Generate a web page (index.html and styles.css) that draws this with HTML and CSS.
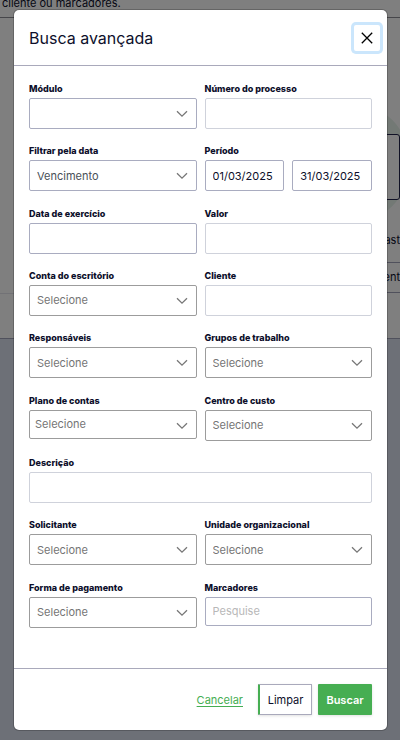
FILE: index.html
```html
<!DOCTYPE html>
<html lang="pt-BR">
<head>
<meta charset="utf-8">
<meta name="viewport" content="width=device-width, initial-scale=1">
<title>Busca avançada</title>
<link rel="stylesheet" href="styles.css">
</head>
<body>
<svg class="sprite" aria-hidden="true">
  <symbol id="chevron" viewBox="0 0 12 8"><path d="M1 1.2 6 6.2 11 1.2" fill="none" stroke="currentColor" stroke-width="1.3"/></symbol>
</svg>
<div class="page" aria-hidden="true">
  <div class="page-intro">cliente ou marcadores.</div>
  <div class="page-panel">
    <div class="blob"></div>
    <div class="page-card"></div>
    <div class="page-cell page-cell-first">ast</div>
    <div class="page-cell page-cell-lined">ent</div>
    <div class="page-rule"></div>
  </div>
</div>
<div class="backdrop"></div>
<form class="modal" role="dialog" aria-labelledby="title">
  <header class="modal-header">
    <h1 id="title">Busca avançada</h1>
    <button type="button" class="close" aria-label="Fechar"><svg viewBox="0 0 12 12" width="12" height="12"><path d="M.8.8 11.2 11.2M11.2.8.8 11.2" stroke="currentColor" stroke-width="1.3"/></svg></button>
  </header>
  <div class="fields">
    <div class="field"><label for="modulo">Módulo</label><div class="select"><select id="modulo" class="control"><option></option></select><svg><use href="#chevron"/></svg></div></div>
    <div class="field"><label for="numero">Número do processo</label><input id="numero" class="control light"></div>
    <div class="field"><label for="filtro">Filtrar pela data</label><div class="select"><select id="filtro" class="control chosen"><option>Vencimento</option></select><svg><use href="#chevron"/></svg></div></div>
    <div class="field"><label for="inicio">Período</label><div class="period"><input id="inicio" class="control" value="01/03/2025"><input class="control" aria-label="Período até" value="31/03/2025"></div></div>
    <div class="field"><label for="exercicio">Data de exercício</label><input id="exercicio" class="control"></div>
    <div class="field"><label for="valor">Valor</label><input id="valor" class="control light"></div>
    <div class="field"><label for="conta">Conta do escritório</label><div class="select"><select id="conta" class="control gray"><option>Selecione</option></select><svg><use href="#chevron"/></svg></div></div>
    <div class="field"><label for="cliente">Cliente</label><input id="cliente" class="control light"></div>
    <div class="field"><label for="resp">Responsáveis</label><div class="select"><select id="resp" class="control gray"><option>Selecione</option></select><svg><use href="#chevron"/></svg></div></div>
    <div class="field"><label for="grupos">Grupos de trabalho</label><div class="select"><select id="grupos" class="control gray"><option>Selecione</option></select><svg><use href="#chevron"/></svg></div></div>
    <div class="field"><label for="plano">Plano de contas</label><div class="select"><select id="plano" class="control gray compact tight"><option>Selecione</option></select><svg><use href="#chevron"/></svg></div></div>
    <div class="field"><label for="centro">Centro de custo</label><div class="select"><select id="centro" class="control gray"><option>Selecione</option></select><svg><use href="#chevron"/></svg></div></div>
    <div class="field wide"><label for="descricao">Descrição</label><input id="descricao" class="control light"></div>
    <div class="field"><label for="solicitante">Solicitante</label><div class="select"><select id="solicitante" class="control gray"><option>Selecione</option></select><svg><use href="#chevron"/></svg></div></div>
    <div class="field"><label for="unidade">Unidade organizacional</label><div class="select"><select id="unidade" class="control gray"><option>Selecione</option></select><svg><use href="#chevron"/></svg></div></div>
    <div class="field"><label for="forma">Forma de pagamento</label><div class="select"><select id="forma" class="control gray"><option>Selecione</option></select><svg><use href="#chevron"/></svg></div></div>
    <div class="field"><label for="marcadores">Marcadores</label><input id="marcadores" class="control compact" placeholder="Pesquise"></div>
  </div>
  <footer class="modal-footer">
    <a href="#" class="cancel">Cancelar</a>
    <button type="reset" class="button clear">Limpar</button>
    <button type="submit" class="button search">Buscar</button>
  </footer>
</form>
</body>
</html>
```
FILE: styles.css
```css
* {
  box-sizing: border-box;
}

body {
  margin: 0;
  min-height: 100vh;
  display: flex;
  position: relative;
  font-family: Inter, "Liberation Sans", sans-serif;
  font-size: 11px;
  color: #0d0f2b;
}

.sprite {
  position: absolute;
  width: 0;
  height: 0;
}

/* Page behind the dialog */
.page {
  position: absolute;
  inset: 0;
  overflow: hidden;
  background: #dbe0ee;
}

.page-intro {
  height: 18px;
  padding-left: 2px;
  background: #fff;
  border-bottom: 1px solid #8c8c94;
  line-height: 6px;
}

.page-panel {
  position: relative;
  height: 321px;
  padding-top: 116px;
  background: #fff;
  border-bottom: 1px solid #a0a3b8;
}

.blob {
  position: absolute;
  top: 84px;
  right: -10px;
  width: 122px;
  height: 122px;
  border-radius: 50%;
  background: #e6f3ea;
}

.page-card {
  position: relative;
  height: 66px;
  width: 60px;
  margin-left: auto;
  background: #fff;
  border: 1px solid #20234a;
  border-radius: 3px;
}

.page-cell {
  position: relative;
  width: 60px;
  margin-left: auto;
  height: 31px;
  line-height: 28px;
  text-align: right;
}

.page-cell-first {
  height: 36px;
  margin-top: 26px;
}

.page-cell-lined {
  border-top: 1px solid #a0a3b8;
  border-bottom: 1px solid #a0a3b8;
}

.page-rule {
  width: 60px;
  border-top: 1px solid #e4e5ec;
}

.backdrop {
  position: absolute;
  inset: 0;
  background: rgba(0, 0, 0, .5);
}

/* Dialog */
.modal {
  position: relative;
  flex: 1;
  display: flex;
  flex-direction: column;
  margin: 9px 12px 9px 13px;
  background: #fff;
  background-clip: padding-box;
  border: 1px solid rgba(0, 0, 0, .2);
  border-radius: 6px;
}

.modal-header {
  display: flex;
  align-items: center;
  justify-content: space-between;
  height: 56px;
  padding: 0 7px 0 15px;
  border-bottom: 1px solid #a9a9bb;
}

h1 {
  margin: 0;
  font-size: 16px;
  font-weight: 400;
  line-height: 24px;
}

.close {
  display: grid;
  place-items: center;
  width: 26px;
  height: 26px;
  padding: 0;
  color: #000;
  background: #fff;
  border: 0;
  border-radius: 2px;
  box-shadow: 0 0 0 3px #cbe6fc;
}

.fields {
  flex: 1;
  display: grid;
  grid-template-columns: 1fr 1fr;
  grid-auto-rows: 1fr;
  column-gap: 8px;
  padding: 17px 15px 24px;
}

.field {
  min-width: 0;
}

.wide {
  grid-column: 1 / -1;
}

label {
  display: block;
  height: 15px;
  font-size: 9px;
  font-weight: 800;
  line-height: 12px;
}

.control {
  display: block;
  width: 100%;
  min-width: 0;
  height: 31px;
  margin: 0;
  padding: 0 7px;
  font: inherit;
  color: #0d0f2b;
  background: #fff;
  border: 1px solid #a9acc0;
  border-radius: 2px;
  appearance: none;
}

.light {
  border-color: #cfd2db;
}

.chosen {
  color: #495057;
}

.gray {
  color: #757575;
  border-color: #9c9c9c;
}

.compact {
  height: 29px;
}

.tight {
  padding-left: 5px;
}

.control::placeholder {
  color: #b8b8b8;
  opacity: 1;
}

.select {
  position: relative;
}

.select svg {
  position: absolute;
  top: 12px;
  right: 9px;
  width: 12px;
  height: 8px;
  color: #777;
  pointer-events: none;
}

.period {
  display: flex;
  gap: 8px;
}

.modal-footer {
  display: flex;
  align-items: center;
  justify-content: flex-end;
  gap: 6px;
  height: 62px;
  padding: 0 15px;
  border-top: 1px solid #a9a9bb;
}

.cancel {
  margin-right: 9px;
  color: #46ae52;
  text-underline-offset: 2px;
}

.button {
  width: 54px;
  height: 31px;
  padding: 0;
  font: inherit;
  border-radius: 1px;
  box-shadow: 0 1px 3px rgba(0, 0, 0, .12);
}

.clear {
  color: #0d0f2b;
  background: #fff;
  border: 1px solid #a9a9bb;
  border-left: 2px solid #46ae52;
}

.search {
  color: #fff;
  font-weight: 600;
  background: #46ae52;
  border: 0;
}
```
